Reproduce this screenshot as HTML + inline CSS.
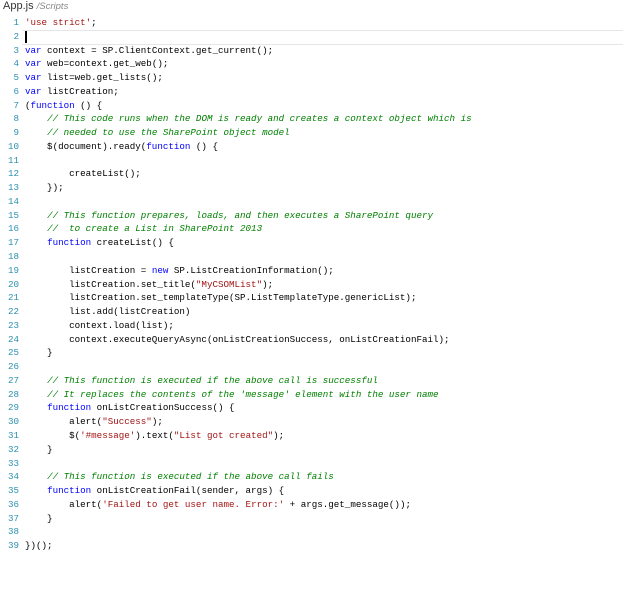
<!DOCTYPE html>
<html><head><style>
body{margin:0;background:#fff;width:623px;height:594px;overflow:hidden;position:relative}
.t{position:absolute;left:3px;top:0px;font:11px "Liberation Sans",sans-serif;color:#333}
.t i{color:#888;font-size:9.5px}
.code{position:absolute;top:16px;left:0;font:9.2px/13.77px "Liberation Mono",monospace;color:#000;white-space:pre;margin:0}
.n{display:inline-block;width:19px;text-align:right;color:#2b91af;margin-right:6px}
.k{color:#00f}.c{color:#008000;font-style:italic}.s{color:#a31515}
.cur{position:absolute;left:22px;right:0;top:30px;height:13px;border-top:1px solid #e6e6e6;border-bottom:1px solid #e6e6e6}
.caret{position:absolute;left:25px;top:31px;width:2px;height:12px;background:#000}
</style></head><body>
<div class="t">App.js <i>/Scripts</i></div>
<div class="cur"></div><div class="caret"></div>
<pre class="code"><span class="n">1</span><span class="s">'use strict'</span>;
<span class="n">2</span>
<span class="n">3</span><span class="k">var</span> context = SP.ClientContext.get_current();
<span class="n">4</span><span class="k">var</span> web=context.get_web();
<span class="n">5</span><span class="k">var</span> list=web.get_lists();
<span class="n">6</span><span class="k">var</span> listCreation;
<span class="n">7</span>(<span class="k">function</span> () {
<span class="n">8</span>    <span class="c">// This code runs when the DOM is ready and creates a context object which is</span>
<span class="n">9</span>    <span class="c">// needed to use the SharePoint object model</span>
<span class="n">10</span>    $(document).ready(<span class="k">function</span> () {
<span class="n">11</span>
<span class="n">12</span>        createList();
<span class="n">13</span>    });
<span class="n">14</span>
<span class="n">15</span>    <span class="c">// This function prepares, loads, and then executes a SharePoint query</span>
<span class="n">16</span>    <span class="c">//  to create a List in SharePoint 2013</span>
<span class="n">17</span>    <span class="k">function</span> createList() {
<span class="n">18</span>
<span class="n">19</span>        listCreation = <span class="k">new</span> SP.ListCreationInformation();
<span class="n">20</span>        listCreation.set_title(<span class="s">"MyCSOMList"</span>);
<span class="n">21</span>        listCreation.set_templateType(SP.ListTemplateType.genericList);
<span class="n">22</span>        list.add(listCreation)
<span class="n">23</span>        context.load(list);
<span class="n">24</span>        context.executeQueryAsync(onListCreationSuccess, onListCreationFail);
<span class="n">25</span>    }
<span class="n">26</span>
<span class="n">27</span>    <span class="c">// This function is executed if the above call is successful</span>
<span class="n">28</span>    <span class="c">// It replaces the contents of the 'message' element with the user name</span>
<span class="n">29</span>    <span class="k">function</span> onListCreationSuccess() {
<span class="n">30</span>        alert(<span class="s">"Success"</span>);
<span class="n">31</span>        $(<span class="s">'#message'</span>).text(<span class="s">"List got created"</span>);
<span class="n">32</span>    }
<span class="n">33</span>
<span class="n">34</span>    <span class="c">// This function is executed if the above call fails</span>
<span class="n">35</span>    <span class="k">function</span> onListCreationFail(sender, args) {
<span class="n">36</span>        alert(<span class="s">'Failed to get user name. Error:'</span> + args.get_message());
<span class="n">37</span>    }
<span class="n">38</span>
<span class="n">39</span>})();</pre>
</body></html>
